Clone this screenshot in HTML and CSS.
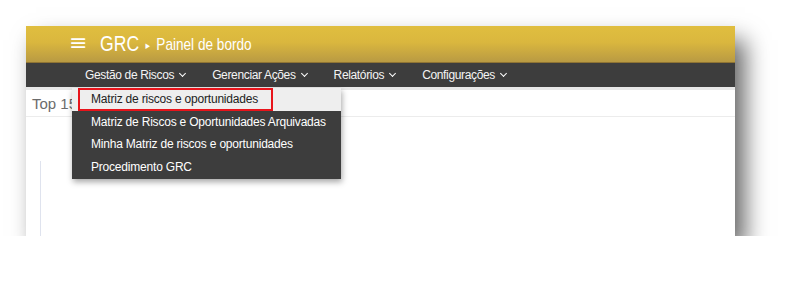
FILE: index.html
```html
<!DOCTYPE html>
<html lang="pt">
<head>
    <meta charset="UTF-8">
    <title>GRC - Painel de bordo</title>
    <link rel="stylesheet" href="styles.css">
</head>
<body>
    <div class="frame">
        <div class="topbar">
            <span class="burger">&#8801;</span>
            <div class="crumbs">
                <span class="brand">GRC</span>
                <span class="caret">&#9656;</span>
                <span class="crumb">Painel de bordo</span>
            </div>
        </div>
        <div class="nav">
            <div class="nav-item">Gestão de Riscos <span class="chev"></span></div>
            <div class="nav-item">Gerenciar Ações <span class="chev"></span></div>
            <div class="nav-item">Relatórios <span class="chev"></span></div>
            <div class="nav-item">Configurações <span class="chev"></span></div>
        </div>
        <div class="content">
            <div class="panel-title">Top 15</div>
            <div class="chart-axis"></div>
        </div>
        <ul class="dropdown">
            <li class="active"><span class="mark">Matriz de riscos e oportunidades</span></li>
            <li>Matriz de Riscos e Oportunidades Arquivadas</li>
            <li>Minha Matriz de riscos e oportunidades</li>
            <li>Procedimento GRC</li>
        </ul>
    </div>
</body>
</html>
```

FILE: styles.css
```css
html, body {
    margin: 0;
    background: #fff;
}

body {
    padding: 26px 0 0 26px;
    font-family: "Liberation Sans", Arial, sans-serif;
}

.frame {
    position: relative;
    width: 709px;
    height: 210px;
    display: flex;
    flex-direction: column;
    background: #fff;
    box-shadow: 10px 14px 22px rgba(0, 0, 0, 0.6);
}

.topbar {
    height: 36px;
    display: flex;
    align-items: center;
    padding-left: 43px;
    color: #fff;
    background: linear-gradient(to bottom, #e0be3f 0%, #dab73e 45%, #b99a43 100%);
    border-bottom: 1px solid #8f7434;
}

.burger {
    font-family: "DejaVu Sans", sans-serif;
    font-size: 22px;
    line-height: 1;
    margin-right: 13px;
    margin-top: -3px;
}

/* condensed look of the original header font */
.crumbs {
    display: flex;
    align-items: center;
    transform: scaleX(0.8);
    transform-origin: left center;
}

.brand {
    font-size: 22px;
    margin-right: 8px;
}

.caret {
    font-family: "DejaVu Sans", sans-serif;
    font-size: 11px;
    margin-right: 8px;
    margin-top: 3px;
}

.crumb {
    font-size: 17px;
    margin-top: 2px;
}

.nav {
    height: 24px;
    display: flex;
    align-items: center;
    padding-left: 59px;
    gap: 27px;
    background: #3d3d3d;
    color: #f4f4f4;
    font-size: 12px;
    letter-spacing: -0.35px;
    border-bottom: 3px solid #e8e8e8;
}

.nav-item {
    display: flex;
    align-items: center;
}

.chev {
    display: inline-block;
    width: 4px;
    height: 4px;
    border-right: 1.5px solid #fff;
    border-bottom: 1.5px solid #fff;
    transform: rotate(45deg);
    margin: -3px 0 0 6px;
}

.content {
    flex: 1;
    display: flex;
    flex-direction: column;
}

.panel-title {
    height: 26px;
    padding-left: 6px;
    display: flex;
    align-items: center;
    font-size: 15px;
    color: #6b6b6b;
    border-bottom: 1px solid #ececec;
}

.chart-axis {
    margin: 44px 0 0 14px;
    flex: 1;
    width: 1px;
    background: #dfe3ee;
}

.dropdown {
    position: absolute;
    left: 46px;
    top: 62px;
    width: 269px;
    margin: 0;
    padding: 0 0 1px;
    list-style: none;
    background: #3d3d3d;
    color: #fff;
    font-size: 12px;
    letter-spacing: -0.2px;
    box-shadow: 1px 3px 6px rgba(0, 0, 0, 0.35);
}

.dropdown li {
    height: 22.5px;
    line-height: 22.5px;
    padding-left: 19px;
}

.dropdown li.active {
    display: flex;
    padding-left: 6px;
    background: #eeeeee;
    color: #222;
}

.mark {
    padding: 0 13px 0 11px;
    border: 2px solid #e8141b;
    line-height: 18.5px;
}
```
